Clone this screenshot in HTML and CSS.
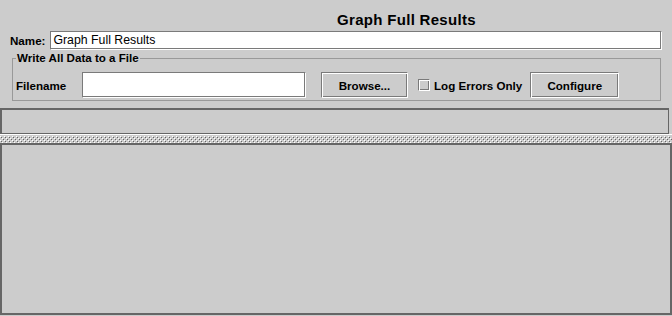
FILE: index.html
```html
<!DOCTYPE html>
<html>
<head>
<meta charset="utf-8">
<link rel="stylesheet" href="styles.css">
</head>
<body>
<div class="title">Graph Full Results</div>
<div class="name-row">
  <span class="lbl">Name:</span>
  <div class="tf name-field">Graph Full Results</div>
</div>
<fieldset class="group">
  <legend>Write All Data to a File</legend>
  <div class="file-row">
    <span class="lbl file-lbl">Filename</span>
    <div class="tf file-field"></div>
    <div class="btn browse">Browse...</div>
    <span class="cb"></span>
    <span class="lbl cb-lbl">Log Errors Only</span>
    <div class="btn configure">Configure</div>
  </div>
</fieldset>
<div class="split">
  <div class="top-pane"></div>
  <div class="divider">
    <svg class="bumps" width="100%" height="7">
      <defs>
        <pattern id="bump" width="4" height="4" patternUnits="userSpaceOnUse">
          <rect x="0" y="0" width="1" height="1" fill="#ffffff"/>
          <rect x="1" y="1" width="1" height="1" fill="#666666"/>
          <rect x="2" y="2" width="1" height="1" fill="#ffffff"/>
          <rect x="3" y="3" width="1" height="1" fill="#666666"/>
        </pattern>
      </defs>
      <rect x="0" y="0" width="100%" height="7" fill="url(#bump)"/>
    </svg>
  </div>
  <div class="bottom-pane"></div>
</div>
</body>
</html>
```
FILE: styles.css
```css
html, body {
  margin: 0;
  padding: 0;
}
body {
  width: 672px;
  height: 316px;
  overflow: hidden;
  background: #cccccc;
  font-family: "Liberation Sans", Arial, sans-serif;
  font-size: 12px;
  color: #000;
}
.title {
  height: 31px;
  box-sizing: border-box;
  padding: 11px 0 0 141px;
  text-align: center;
  font-size: 15px;
  font-weight: bold;
  letter-spacing: 0.3px;
  line-height: 18px;
}
.lbl {
  font-weight: bold;
  font-size: 11.6px;
  white-space: nowrap;
}
.name-row {
  display: flex;
  align-items: center;
  gap: 5px;
  padding: 0 10px;
  height: 19px;
}
.tf {
  box-sizing: border-box;
  background: #fff;
  border-style: solid;
  border-width: 1px;
  border-color: #7a7a7a #ffffff #ffffff #7a7a7a;
  box-shadow: inset -1px -1px 0 #7a7a7a;
}
.name-field {
  flex: 1;
  height: 19px;
  padding-left: 2px;
  line-height: 16px;
  font-size: 12.3px;
}
.group {
  margin: 1px 11px 0 12px;
  padding: 7px 2px 2px 3px;
  border: 1px solid #999999;
}
.group legend {
  padding: 0 1px;
  font-weight: bold;
  font-size: 11.6px;
  line-height: 14px;
}
.file-row {
  display: flex;
  align-items: center;
  height: 26px;
}
.file-lbl {
  width: 66px;
  flex: none;
}
.file-field {
  width: 224px;
  height: 26px;
  flex: none;
}
.btn {
  box-sizing: border-box;
  height: 26px;
  display: flex;
  align-items: center;
  justify-content: center;
  font-weight: bold;
  font-size: 11.6px;
  border-style: solid;
  border-width: 1px;
  border-color: #7a7a7a #ffffff #ffffff #7a7a7a;
  box-shadow: inset 1px 1px 0 #ffffff, inset -1px -1px 0 #7a7a7a;
  flex: none;
}
.browse {
  width: 87px;
  margin-left: 15px;
}
.cb {
  box-sizing: border-box;
  width: 12px;
  height: 12px;
  margin-left: 10px;
  border-style: solid;
  border-width: 1px;
  border-color: #7a7a7a #ffffff #ffffff #7a7a7a;
  box-shadow: inset 1px 1px 0 #ffffff, inset -1px -1px 0 #7a7a7a;
  flex: none;
}
.cb-lbl {
  margin-left: 4px;
}
.configure {
  width: 89px;
  margin-left: 8px;
}
.split {
  margin-top: 7px;
}
.top-pane {
  box-sizing: border-box;
  height: 26px;
  width: 669px;
  border-style: solid;
  border-color: #666666;
  border-width: 2px 1px 1px 2px;
}
.divider {
  height: 10px;
  border-top: 1px solid #ffffff;
  border-bottom: 1px solid #666666;
  box-sizing: border-box;
  padding-top: 1px;
}
.bumps {
  display: block;
}
.bottom-pane {
  box-sizing: border-box;
  height: 171px;
  width: 672px;
  border-style: solid;
  border-color: #666666;
  border-width: 1px 2px 2px 2px;
}
```
